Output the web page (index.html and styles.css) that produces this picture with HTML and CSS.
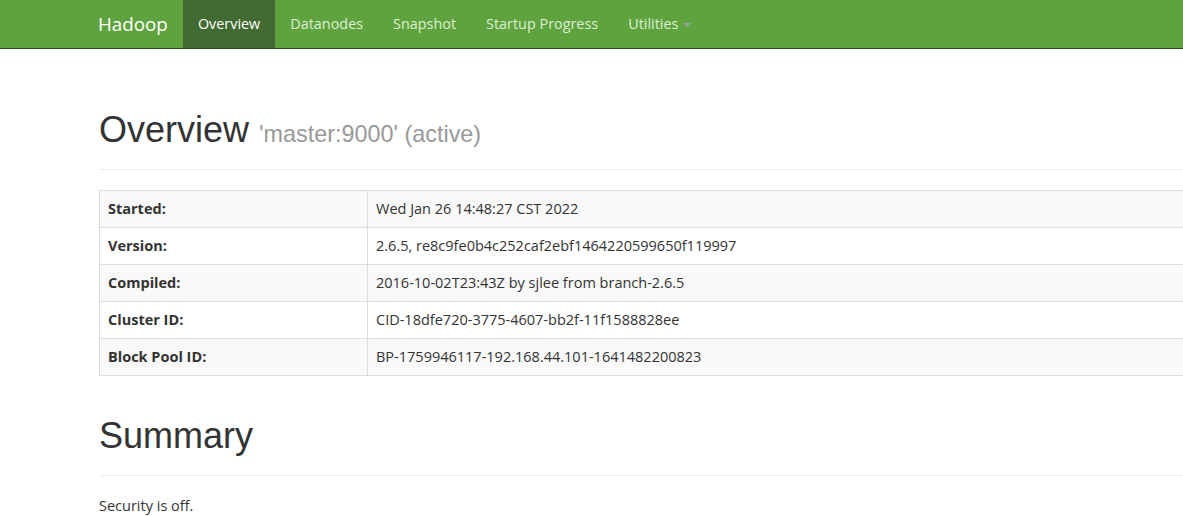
FILE: index.html
```html
<!DOCTYPE html>
<html lang="en">
<head>
<meta charset="utf-8">
<title>Namenode information</title>
<link rel="stylesheet" href="styles.css">
</head>
<body>
<header class="navbar">
  <div class="nav-inner">
    <a class="brand" href="#">Hadoop</a>
    <ul class="nav">
      <li class="active"><a href="#">Overview</a></li>
      <li><a href="#">Datanodes</a></li>
      <li><a href="#">Snapshot</a></li>
      <li><a href="#">Startup Progress</a></li>
      <li><a href="#">Utilities <span class="caret"></span></a></li>
    </ul>
  </div>
</header>
<main class="container">
  <div class="page-header first">
    <h1>Overview <small>'master:9000' (active)</small></h1>
  </div>
  <table class="table">
    <tbody>
      <tr><th>Started:</th><td>Wed Jan 26 14:48:27 CST 2022</td></tr>
      <tr><th>Version:</th><td>2.6.5, re8c9fe0b4c252caf2ebf1464220599650f119997</td></tr>
      <tr><th>Compiled:</th><td>2016-10-02T23:43Z by sjlee from branch-2.6.5</td></tr>
      <tr><th>Cluster ID:</th><td>CID-18dfe720-3775-4607-bb2f-11f1588828ee</td></tr>
      <tr><th>Block Pool ID:</th><td>BP-1759946117-192.168.44.101-1641482200823</td></tr>
    </tbody>
  </table>
  <div class="page-header second">
    <h1>Summary</h1>
  </div>
  <p class="text">Security is off.</p>
</main>
</body>
</html>
```
FILE: styles.css
```css
html, body {
  margin: 0;
  padding: 0;
}
body {
  background: #fff;
  color: #333;
  font-family: "Open Sans", "Noto Sans", sans-serif;
  font-size: 14.5px;
  line-height: 20px;
  overflow: hidden;
}
.navbar {
  background: #5fa33e;
  border-bottom: 1px solid #2d4a20;
  height: 48px;
}
.nav-inner {
  display: flex;
  align-items: stretch;
  height: 48px;
  padding-left: 83px;
}
.brand {
  display: flex;
  align-items: center;
  padding: 0 15px;
  color: #fff;
  font-size: 18.8px;
  text-decoration: none;
}
.nav {
  display: flex;
  list-style: none;
  margin: 0;
  padding: 0;
}
.nav li {
  display: flex;
}
.nav a {
  display: flex;
  align-items: center;
  padding: 0 15px;
  color: #ddf0d4;
  text-decoration: none;
  font-size: 14.4px;
}
.nav li.active a {
  background: #426a33;
  color: #fff;
}
.caret {
  display: inline-block;
  width: 0;
  height: 0;
  margin-left: 5px;
  margin-top: 2px;
  border-top: 4px solid #9aa597;
  border-left: 4px solid transparent;
  border-right: 4px solid transparent;
}
.container {
  width: 1140px;
  padding-left: 99px;
}
.page-header {
  border-bottom: 1px solid #eee;
  padding-bottom: 9px;
}
.page-header.first {
  padding-top: 61px;
}
.page-header.second {
  padding-top: 20px;
}
h1 {
  margin: 0 0 10px;
  font-family: "Liberation Sans", Arial, sans-serif;
  font-weight: 400;
  font-size: 36px;
  line-height: 40px;
  color: #333;
}
h1 small {
  font-size: 23.4px;
  line-height: 1;
  color: #999;
  font-weight: 400;
}
.table {
  width: 1140px;
  margin: 20px 0 20px;
  border-collapse: collapse;
  border: 1px solid #ddd;
}
.table th,
.table td {
  border: 1px solid #ddd;
  padding: 8px;
  line-height: 20px;
  text-align: left;
  vertical-align: top;
}
.table th {
  width: 251px;
  font-weight: 700;
}
.table tr:nth-child(odd) {
  background: #f9f9f9;
}
.text {
  margin: 20px 0 0;
}
```
